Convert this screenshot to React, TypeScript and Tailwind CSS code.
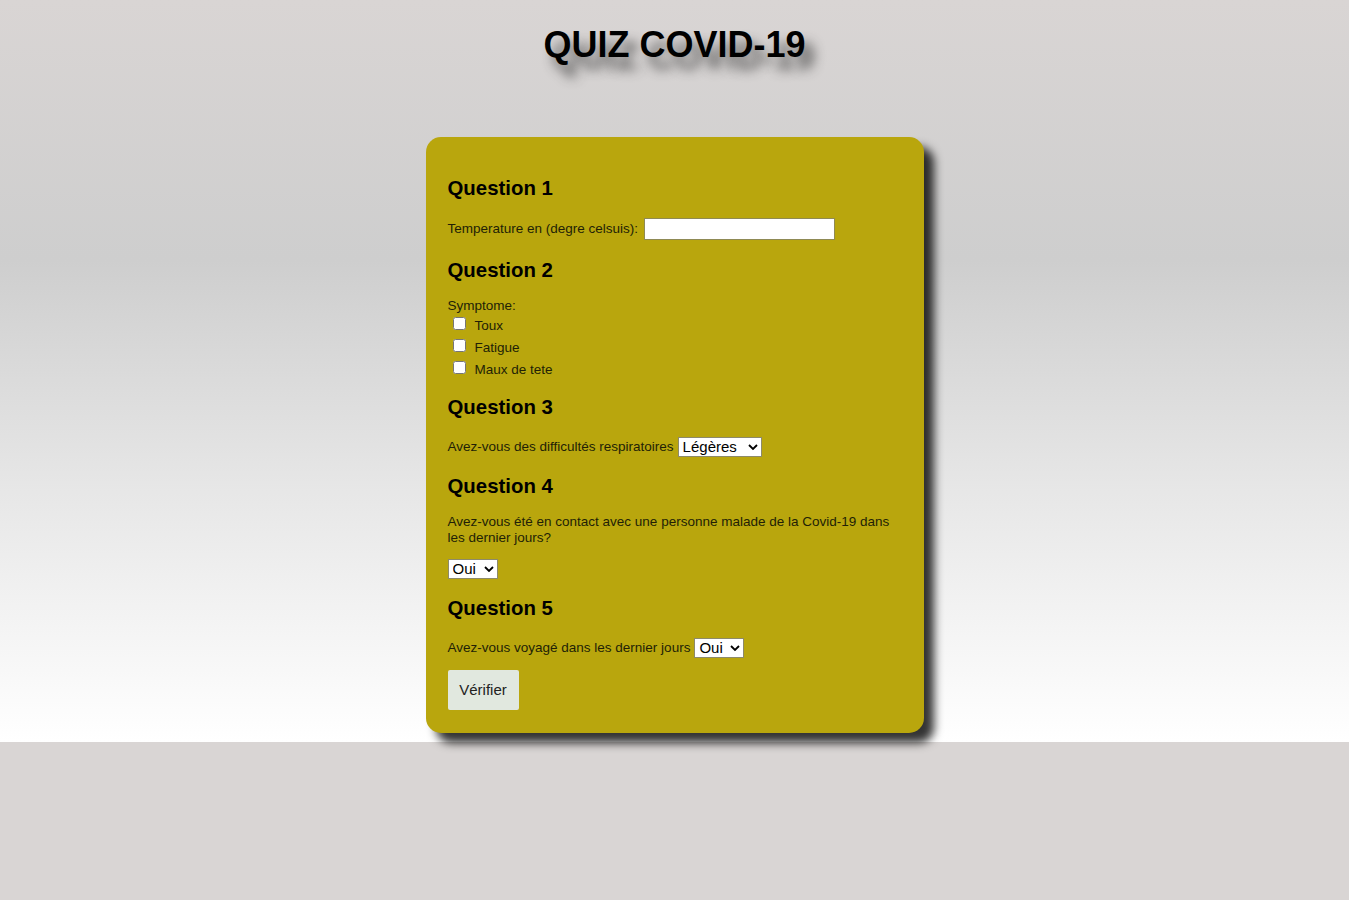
import React from "react";

function Chevron() {
  return (
    <svg
      className="pointer-events-none absolute right-[4px] top-1/2 -translate-y-1/2"
      width="10"
      height="7"
      viewBox="0 0 10 7"
    >
      <path d="M1 1.5 L5 5.5 L9 1.5" fill="none" stroke="#000" strokeWidth="1.8" />
    </svg>
  );
}

function Select({ value, width }: { value: string; width: string }) {
  return (
    <span className={`relative inline-block align-middle ${width}`}>
      <select
        defaultValue={value}
        className="h-[20px] w-full appearance-none rounded-none border border-[#8d8a6a] bg-white pl-[4px] pr-[16px] text-[15px] leading-[18px] text-black"
      >
        <option>{value}</option>
      </select>
      <Chevron />
    </span>
  );
}

export default function App() {
  const font = "font-['Liberation_Sans',Arial,sans-serif]";
  return (
    <div className={`min-h-[900px] bg-[#d9d5d4] ${font}`}>
      <div className="flex flex-col items-center bg-[linear-gradient(to_bottom,#d9d5d4_0%,#cecece_35%,#e6e6e6_65%,#ffffff_100%)] pb-[9px]">
        <h1 className="mt-[24px] h-[42px] text-[36px] font-bold leading-[42px] text-black [text-shadow:9px_12px_12px_rgba(60,60,60,0.85)]">
          QUIZ COVID-19
        </h1>
        <div className="mt-[71px] flex w-[498px] flex-col rounded-[15px] bg-[#b9a60d] px-[22px] pb-[23px] pt-[39px] text-[13.5px] leading-[16px] text-[#221f06] shadow-[10px_10px_10px_rgba(0,0,0,0.8)]">
          <h2 className="h-[24px] text-[20.4px] font-bold leading-[24px] text-black">Question 1</h2>
          <div className="mt-[18px] flex h-[22px] items-center">
            <span>Temperature en (degre celsuis):</span>
            <input
              type="text"
              className="ml-[6px] h-[22px] w-[191px] border border-[#8f8a55] bg-white"
            />
          </div>

          <h2 className="mt-[18px] h-[24px] text-[20.4px] font-bold leading-[24px] text-black">Question 2</h2>
          <div className="mt-[16px] h-[16px]">Symptome:</div>
          {["Toux", "Fatigue", "Maux de tete"].map((s) => (
            <label key={s} className="flex h-[22px] items-center">
              <input type="checkbox" className="ml-[5px] mr-[9px] mt-[-3px] h-[13px] w-[13px]" />
              <span className="mt-[2px]">{s}</span>
            </label>
          ))}

          <h2 className="mt-[15px] h-[24px] text-[20.4px] font-bold leading-[24px] text-black">Question 3</h2>
          <div className="mt-[18px] flex h-[20px] items-center">
            <span>Avez-vous des difficultés respiratoires</span>
            <span className="ml-[4px] flex">
              <Select value="Légères" width="w-[84px]" />
            </span>
          </div>

          <h2 className="mt-[17px] h-[24px] text-[20.4px] font-bold leading-[24px] text-black">Question 4</h2>
          <p className="mt-[16px]">
            Avez-vous été en contact avec une personne malade de la Covid-19 dans les dernier jours?
          </p>
          <div className="mt-[13px] flex h-[20px]">
            <Select value="Oui" width="w-[50px]" />
          </div>

          <h2 className="mt-[17px] h-[24px] text-[20.4px] font-bold leading-[24px] text-black">Question 5</h2>
          <div className="mt-[18px] flex h-[20px] items-center">
            <span>Avez-vous voyagé dans les dernier jours</span>
            <span className="ml-[4px] flex">
              <Select value="Oui" width="w-[50px]" />
            </span>
          </div>

          <div className="mt-[12px] flex">
            <button className="h-[40px] w-[71px] rounded-[2px] bg-[#e1e8df] text-[15px] text-[#222]">
              Vérifier
            </button>
          </div>
        </div>
      </div>
    </div>
  );
}
